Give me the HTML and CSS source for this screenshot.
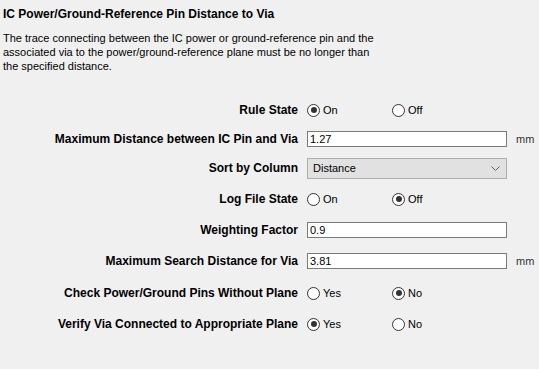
FILE: index.html
```html
<!DOCTYPE html>
<html lang="en">

<head>
    <meta charset="UTF-8">
    <title>IC Power/Ground-Reference Pin Distance to Via</title>
    <link rel="stylesheet" href="styles.css">
</head>

<body>

    <div class="header">
        <h1 class="title">IC Power/Ground-Reference Pin Distance to Via</h1>
        <p class="desc">The trace connecting between the IC power or ground-reference pin and the associated via to the power/ground-reference plane must be no longer than the specified distance.</p>
    </div>

    <form class="rules">

        <div class="row">
            <span class="label">Rule State</span>
            <div class="radios">
                <label class="radio"><input type="radio" name="ruleState" checked>On</label>
                <label class="radio"><input type="radio" name="ruleState">Off</label>
            </div>
        </div>

        <div class="row short">
            <label class="label" for="maxDist">Maximum Distance between IC Pin and Via</label>
            <input class="text" type="text" id="maxDist" value="1.27">
            <span class="unit">mm</span>
        </div>

        <div class="row">
            <label class="label" for="sortBy">Sort by Column</label>
            <div class="select" id="sortBy">
                <span>Distance</span>
                <svg width="9" height="5" viewBox="0 0 9 5"><path d="M0.5 0.5 L4.5 4.5 L8.5 0.5" fill="none" stroke="#606060" stroke-width="1"/></svg>
            </div>
        </div>

        <div class="row tall">
            <span class="label">Log File State</span>
            <div class="radios">
                <label class="radio"><input type="radio" name="logState">On</label>
                <label class="radio"><input type="radio" name="logState" checked>Off</label>
            </div>
        </div>

        <div class="row">
            <label class="label" for="weight">Weighting Factor</label>
            <input class="text" type="text" id="weight" value="0.9">
        </div>

        <div class="row tall">
            <label class="label" for="searchDist">Maximum Search Distance for Via</label>
            <input class="text" type="text" id="searchDist" value="3.81">
            <span class="unit">mm</span>
        </div>

        <div class="row tall">
            <span class="label">Check Power/Ground Pins Without Plane</span>
            <div class="radios">
                <label class="radio"><input type="radio" name="checkPins">Yes</label>
                <label class="radio"><input type="radio" name="checkPins" checked>No</label>
            </div>
        </div>

        <div class="row">
            <span class="label">Verify Via Connected to Appropriate Plane</span>
            <div class="radios">
                <label class="radio"><input type="radio" name="verifyVia" checked>Yes</label>
                <label class="radio"><input type="radio" name="verifyVia">No</label>
            </div>
        </div>

    </form>

</body>

</html>
```

FILE: styles.css
```css
body {
    font-family: "Liberation Sans", Arial, sans-serif;
    font-size: 11px;
    color: #000;
    background-color: #f0f0f0;
    margin: 0;
    padding: 0;
}

.header {
    padding: 7px 3px 0 3px;
}

.title {
    font-size: 12px;
    font-weight: bold;
    line-height: 14px;
    margin: 0;
}

.desc {
    width: 377px;
    line-height: 14px;
    margin: 10px 0 0 0;
}

.rules {
    margin-top: 22px;
}

.row {
    display: grid;
    grid-template-columns: 298px 200px auto;
    column-gap: 9px;
    align-items: center;
    height: 30px;
}

.row.short {
    height: 28px;
}

.row.tall {
    height: 32px;
}

.label {
    font-size: 12px;
    font-weight: bold;
    text-align: right;
}

.radios {
    display: flex;
}

.radio {
    display: flex;
    align-items: center;
    width: 85px;
}

.radio input {
    appearance: none;
    width: 13px;
    height: 13px;
    margin: 0 3px 0 0;
    border: 1px solid #333;
    border-radius: 50%;
    background-color: #fff;
    box-sizing: border-box;
    position: relative;
}

.radio input:checked::after {
    content: "";
    position: absolute;
    left: 2.5px;
    top: 2.5px;
    width: 6px;
    height: 6px;
    border-radius: 50%;
    background-color: #333;
}

.text {
    width: 200px;
    height: 16px;
    padding: 0 2px;
    border: 1px solid #7a7a7a;
    background-color: #fff;
    box-sizing: border-box;
    font-family: inherit;
    font-size: 11px;
    color: #000;
}

.select {
    display: flex;
    justify-content: space-between;
    align-items: center;
    width: 200px;
    height: 21px;
    padding: 0 6px 0 5px;
    border: 1px solid #adadad;
    background-color: #e1e1e1;
    box-sizing: border-box;
}

.unit {
    color: #333;
}
```
